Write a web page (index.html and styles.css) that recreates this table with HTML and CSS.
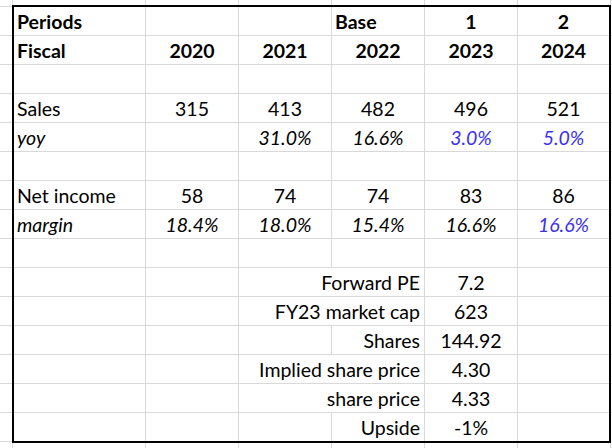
FILE: index.html
```html
<!DOCTYPE html>
<html lang="en">
<head>
<meta charset="utf-8">
<title>Valuation sheet</title>
<link rel="stylesheet" href="styles.css">
</head>
<body>
<div class="sheet">
  <div class="c l b">Periods</div><div class="c"></div><div class="c"></div><div class="c l b">Base</div><div class="c b">1</div><div class="c b">2</div>
  <div class="c l b">Fiscal</div><div class="c b">2020</div><div class="c b">2021</div><div class="c b">2022</div><div class="c b">2023</div><div class="c b">2024</div>
  <div class="c"></div><div class="c"></div><div class="c"></div><div class="c"></div><div class="c"></div><div class="c"></div>
  <div class="c l">Sales</div><div class="c">315</div><div class="c">413</div><div class="c">482</div><div class="c">496</div><div class="c">521</div>
  <div class="c l i">yoy</div><div class="c"></div><div class="c i">31.0%</div><div class="c i">16.6%</div><div class="c i blue">3.0%</div><div class="c i blue">5.0%</div>
  <div class="c"></div><div class="c"></div><div class="c"></div><div class="c"></div><div class="c"></div><div class="c"></div>
  <div class="c l">Net income</div><div class="c">58</div><div class="c">74</div><div class="c">74</div><div class="c">83</div><div class="c">86</div>
  <div class="c l i">margin</div><div class="c i">18.4%</div><div class="c i">18.0%</div><div class="c i">15.4%</div><div class="c i">16.6%</div><div class="c i blue">16.6%</div>
  <div class="c"></div><div class="c"></div><div class="c"></div><div class="c"></div><div class="c"></div><div class="c"></div>
  <div class="c"></div><div class="c"></div><div class="c r span2">Forward PE</div><div class="c">7.2</div><div class="c"></div>
  <div class="c"></div><div class="c"></div><div class="c r span2">FY23 market cap</div><div class="c">623</div><div class="c"></div>
  <div class="c"></div><div class="c"></div><div class="c"></div><div class="c r">Shares</div><div class="c">144.92</div><div class="c"></div>
  <div class="c"></div><div class="c"></div><div class="c r span2">Implied share price</div><div class="c">4.30</div><div class="c"></div>
  <div class="c"></div><div class="c"></div><div class="c r span2">share price</div><div class="c">4.33</div><div class="c"></div>
  <div class="c"></div><div class="c"></div><div class="c"></div><div class="c r">Upside</div><div class="c">-1%</div><div class="c"></div>
</div>
</body>
</html>
```
FILE: styles.css
```css
html, body {
  margin: 0;
  padding: 0;
}

body {
  width: 612px;
  height: 448px;
  overflow: hidden;
  background-color: #ffffff;
  background-image:
    repeating-linear-gradient(to bottom, #d9d9d9 0 1px, transparent 1px 29px),
    repeating-linear-gradient(to right, #d9d9d9 0 1px, transparent 1px 93px),
    linear-gradient(#d9d9d9, #d9d9d9);
  background-position: 0 6px, 145px 0, 12px 0;
  background-size: 100% 436px, 467px 100%, 1px 100%;
  background-repeat: no-repeat;
  font-family: Lato, "Open Sans", sans-serif;
  font-size: 19.5px;
  color: #000;
}

.sheet {
  margin: 5px 0 0 12px;
  width: 595px;
  border: 2px solid #000;
  display: grid;
  grid-template-columns: 131px repeat(4, 92px) 91px;
  grid-template-rows: repeat(15, 28px);
  gap: 1px;
  background: #d9d9d9;
}

.c {
  background: #fff;
  display: flex;
  align-items: flex-end;
  justify-content: center;
  padding: 0 3px 2px;
  line-height: 22px;
  white-space: nowrap;
  overflow: visible;
}

.l {
  justify-content: flex-start;
}

.r {
  justify-content: flex-end;
  padding-right: 4px;
}

.b {
  font-weight: 700;
}

.i {
  font-style: italic;
}

.blue {
  color: #3b30f2;
}

.span2 {
  grid-column: span 2;
}
```
